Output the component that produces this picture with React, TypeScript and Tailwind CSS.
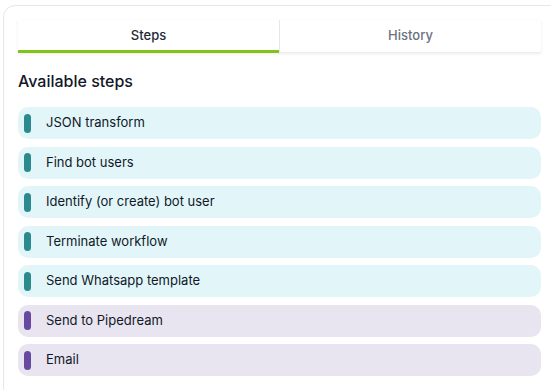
import { useState } from "react";

type Kind = "transform" | "action";

type Step = {
  name: string;
  kind: Kind;
};

const steps: Step[] = [
  { name: "JSON transform", kind: "transform" },
  { name: "Find bot users", kind: "transform" },
  { name: "Identify (or create) bot user", kind: "transform" },
  { name: "Terminate workflow", kind: "transform" },
  { name: "Send Whatsapp template", kind: "transform" },
  { name: "Send to Pipedream", kind: "action" },
  { name: "Email", kind: "action" }
];

const tabs = ["Steps", "History"] as const;

export default function App() {
  const [active, setActive] = useState<(typeof tabs)[number]>("Steps");

  return (
    <div
      className="h-[390px] w-[551px] overflow-hidden bg-white pl-[3px] pt-[5px]"
      style={{ fontFamily: "Inter, 'Noto Sans', sans-serif" }}
    >
      <div className="h-[420px] w-[600px] rounded-tl-[12px] border border-[#e5e7eb] pl-[14px] pt-[14px]">
        <div className="flex w-[523px] shadow-[0_1px_3px_rgba(0,0,0,0.08)]">
          {tabs.map((tab, i) => {
            const on = tab === active;
            return (
              <button
                key={tab}
                onClick={() => setActive(tab)}
                className={`h-[33px] flex-1 text-[13px] font-medium ${
                  on
                    ? "border-b-[3px] border-[#80c41a] pt-[2px] text-[#1f2937]"
                    : "border-b border-[#eceef1] text-[#6b7280]"
                } ${i > 0 ? "border-l border-l-[#e5e7eb]" : ""}`}
              >
                {tab}
              </button>
            );
          })}
        </div>

        <h2 className="mt-[18px] text-[16px] font-medium leading-[20px] text-[#111827]">
          Available steps
        </h2>

        <div className="mt-[16px] flex w-[523px] flex-col gap-[7.5px]">
          {steps.map((step) => (
            <div
              key={step.name}
              className={`flex h-[32px] items-center rounded-[10px] pl-[6px] ${
                step.kind === "transform" ? "bg-[#e2f6f9]" : "bg-[#e8e5f0]"
              }`}
            >
              <span
                className={`h-[19px] w-[7px] rounded-full ${
                  step.kind === "transform" ? "bg-[#2a8a8d]" : "bg-[#674aa0]"
                }`}
              />
              <span className="ml-[15px] text-[13px] text-[#111827]">{step.name}</span>
            </div>
          ))}
        </div>
      </div>
    </div>
  );
}
